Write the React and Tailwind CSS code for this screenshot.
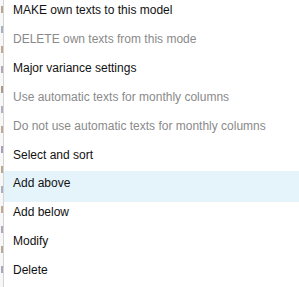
export default function App() {
  const items = [
    { t: "MAKE own texts to this model" },
    { t: "DELETE own texts from this mode", d: true },
    { t: "Major variance settings" },
    { t: "Use automatic texts for monthly columns", d: true },
    { t: "Do not use automatic texts for monthly columns", d: true },
    { t: "Select and sort" },
    { t: "Add above", h: true },
    { t: "Add below" },
    { t: "Modify" },
    { t: "Delete" },
  ];
  const marks = [
    "bg-[#b9a58f]", "bg-[#a8b0c0]", "bg-[#c2a890]", "bg-[#b0a8b8]", "bg-[#a89a8a]",
    "bg-[#b0b0c0]", "bg-[#c0a898]", "bg-[#a8a0b8]", "bg-[#b8a890]", "bg-[#a8b0c0]",
    "bg-[#c0a890]", "bg-[#b0a8b8]", "bg-[#b8a898]", "bg-[#a8a8b8]",
  ];
  return (
    <div className="w-[299px] h-[287px] overflow-hidden bg-white flex" style={{ fontFamily: '"Liberation Sans", Arial, sans-serif' }}>
      <div className="w-[3px] flex flex-col items-end pt-[6px] gap-[13px] bg-[#f7f7f7]">
        {marks.map((c, i) => (
          <div key={i} className={"w-[2px] h-[7px] " + c} />
        ))}
      </div>
      <div className="w-px bg-[#d4d4d4]" />
      <div className="flex-1 flex flex-col mt-[-2px]">
        {items.map((it, i) => (
          <div
            key={i}
            className={
              "pl-[9px] whitespace-nowrap text-[12px] leading-[25px] " +
              (it.h ? "h-[31px] mb-[-2px] bg-[#e5f3fb] " : "h-[29px] ") +
              (it.d ? "text-[#8a8a8a]" : "text-[#111111]")
            }
          >
            {it.t}
          </div>
        ))}
      </div>
    </div>
  );
}
